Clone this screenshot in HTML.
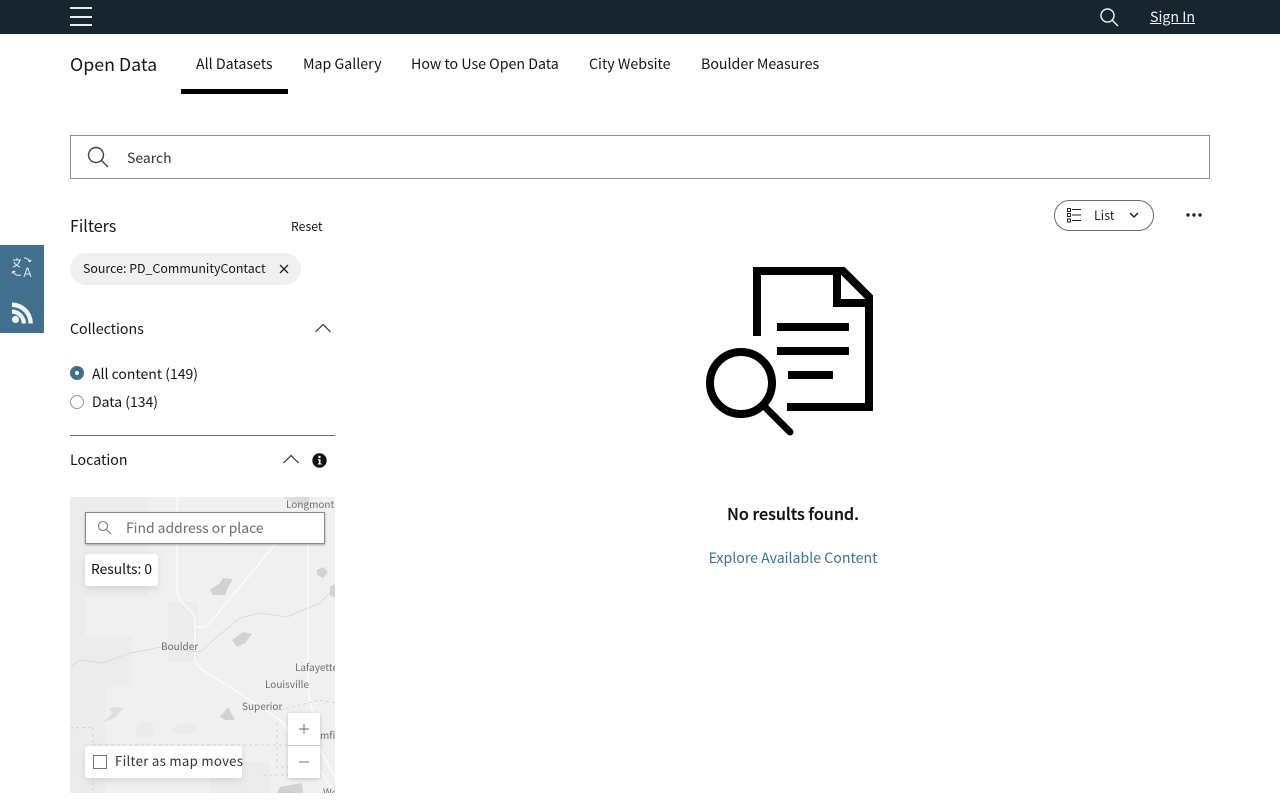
<!DOCTYPE html>
<html lang="en"><head><meta charset="utf-8"><title>Open Data</title>
<style>
html,body{margin:0;padding:0;background:#fff}
body{width:1280px;height:800px;overflow:hidden;position:relative;font-family:"Noto Sans CJK JP","Liberation Sans",sans-serif;color:#151515}
.a{position:absolute;white-space:nowrap;line-height:20px}
svg{position:absolute;display:block}
a{color:inherit}
.m{font-size:10px;color:#6e6e6e;line-height:14px}
</style></head><body>
<div class="a" style="left:0;top:0;width:1280px;height:34px;background:#17262e"></div>
<div class="a" style="left:70px;top:7px;width:22px;height:2px;background:#e8ecee"></div>
<div class="a" style="left:70px;top:16px;width:22px;height:2px;background:#e8ecee"></div>
<div class="a" style="left:70px;top:24px;width:22px;height:2px;background:#e8ecee"></div>
<svg style="left:1098px;top:6px" width="22" height="22" fill="none" stroke="#e8ecee" stroke-width="1.500"><circle cx="9.500" cy="9.500" r="6.500"/><path d="M14 14l6 6"/></svg>
<a class="a" style="left:1150px;top:7px;font-size:14.200px;color:#f2f4f5;text-decoration:underline">Sign In</a>

<div class="a" style="left:70px;top:54px;font-size:17.800px">Open Data</div>
<div class="a" style="left:196px;top:54px;font-size:14.200px">All Datasets</div>
<div class="a" style="left:181px;top:89px;width:107px;height:5px;background:#000"></div>
<div class="a" style="left:303px;top:54px;font-size:14.200px">Map Gallery</div>
<div class="a" style="left:411px;top:54px;font-size:14.200px">How to Use Open Data</div>
<div class="a" style="left:589px;top:54px;font-size:14.200px">City Website</div>
<div class="a" style="left:701px;top:54px;font-size:14.200px">Boulder Measures</div>

<div class="a" style="left:70px;top:135px;width:1138px;height:42px;border:1px solid #8f8f8f"></div>
<svg style="left:86px;top:146px" width="24" height="24" fill="none" stroke="#444" stroke-width="1.400"><circle cx="10" cy="9" r="7.500"/><path d="M15.500 14.500l6.500 6.500"/></svg>
<div class="a" style="left:127px;top:148px;font-size:14px;color:#333">Search</div>

<div class="a" style="left:0;top:245px;width:44px;height:88px;background:#41708f"></div>
<svg style="left:10px;top:255px" width="24" height="24" fill="none" stroke="#e8eef2" stroke-width="1"><path d="M3 5h8M7 3v2M10 5c-1 4-4 6-7 7M4 7c1 2 3 4 6 5"/><path d="M14 3c3 0 5 1 6 4M20 7l-2-1.500M20 7l1.200-2.200"/><path d="M11 20c-3 1-7 0-8-4M3 16l-1 2.500M3 16l2.500 1"/><path d="M14 22l3.200-9h.6l3.200 9M15 19h5"/></svg>
<svg style="left:11px;top:302px" width="22" height="22" fill="#eef3f6"><circle cx="4.500" cy="17.500" r="3.600"/><path d="M1 7.500v4.300a9.700 9.700 0 0 1 9.700 9.700h4.300A14 14 0 0 0 1 7.500zM1 .5v4.500A16.500 16.500 0 0 1 17.500 21.500h4.300A20.800 20.800 0 0 0 1 .5z"/></svg>

<div class="a" style="left:70px;top:215px;font-size:16.100px">Filters</div>
<div class="a" style="left:291px;top:216px;font-size:12.300px">Reset</div>
<div class="a" style="left:70px;top:253px;width:231px;height:32px;border-radius:16px;background:#f0f0f0"></div>
<div class="a" style="left:83px;top:258px;font-size:12.400px">Source: PD_CommunityContact</div>
<svg style="left:279px;top:264px" width="10" height="10" stroke="#222" stroke-width="1.300"><path d="M1 1l8 8M9 1l-8 8"/></svg>

<div class="a" style="left:70px;top:319px;font-size:14.200px">Collections</div>
<svg style="left:315px;top:323px" width="16" height="10" fill="none" stroke="#333" stroke-width="1.200"><path d="M.5 9L8 1.500 15.500 9"/></svg>
<div class="a" style="left:70px;top:366px;width:14px;height:14px;border-radius:50%;background:#41708f"></div>
<div class="a" style="left:75px;top:371px;width:4px;height:4px;border-radius:50%;background:#fff"></div>
<div class="a" style="left:92px;top:364px;font-size:14px">All content (149)</div>
<div class="a" style="left:70px;top:395px;width:12px;height:12px;border-radius:50%;border:1px solid #949494"></div>
<div class="a" style="left:92px;top:392px;font-size:14px">Data (134)</div>
<div class="a" style="left:70px;top:435px;width:265px;height:1px;background:#6b6b6b"></div>
<div class="a" style="left:70px;top:450px;font-size:14.200px">Location</div>
<svg style="left:283px;top:454px" width="16" height="10" fill="none" stroke="#333" stroke-width="1.200"><path d="M.5 9L8 1.500 15.500 9"/></svg>
<svg style="left:312px;top:453px" width="15" height="15"><circle cx="7.500" cy="7.500" r="7.200" fill="#111"/><circle cx="7.500" cy="4" r="1.200" fill="#fff"/><path d="M5.800 6.300h2.700v4.200h1v1H5.800v-1h1V7.300h-1z" fill="#fff"/></svg>

<svg style="left:70px;top:497px" width="265" height="296" viewBox="0 0 265 296">
<rect width="265" height="296" fill="#f0f0f0"/>
<g fill="#ececec"><rect x="0" y="0" width="78" height="100"/><rect x="0" y="100" width="15" height="60"/><rect x="0" y="140" width="62" height="50"/><rect x="0" y="190" width="35" height="106"/><rect x="98" y="105" width="30" height="60"/><rect x="140" y="265" width="60" height="31"/></g>
<g fill="#ebebeb"><ellipse cx="75" cy="233" rx="10" ry="8"/><ellipse cx="115" cy="232" rx="12" ry="5"/></g>
<g fill="#d2d2d2"><path d="M140 93l10-7 3-5 10 1-5 8-3 8-12 0z"/><path d="M162 143l11-8 9 2-7 9-8 4z"/><path d="M247 73l6-3 5 5-5 6-6-3z"/><path d="M260 90l5-3v13l-5-1z"/><path d="M150 220l8-10 7 13-10 0z"/><path d="M210 290l22-4 1 10h-26z"/></g>
<path d="M42 210l11 1-8 10-12 4 7-6 3-4-4-2z" fill="#dedede"/>
<g fill="none" stroke="#fbfbfb" stroke-width="1.500"><path d="M107 0v92q0 8 5 13l8 8q5 5 5 9v39q0 6 5 10l28 18 52 34 30 36 25 37"/><path d="M125 130h8q4 0 7-4l63-76 37-40"/><path d="M238 0v193l12 60 15 27"/></g>
<path fill="none" stroke="#d6d6d6" stroke-width=".8" d="M0 170l10-7 23 3 27-10 17-3 13-3 17 3 23 2 17-15 23-19 20-5 27 4 33-14 15-16"/>
<g fill="none" stroke="#cccccc" stroke-width=".8" stroke-dasharray="3 3"><path d="M0 231l23-1v66M23 248h194M207 226v44h20M193 278h30l3-18M250 203l15 3M210 213l40-10"/></g>
<path d="M212 0l17 9 10-1v-8z" fill="#dedede"/>
</svg>
<div class="a m" style="left:286px;top:497px;width:49px;overflow:hidden">Longmont</div>
<div class="a m" style="left:161px;top:639px">Boulder</div>
<div class="a m" style="left:295px;top:660px;width:40px;overflow:hidden">Lafayette</div>
<div class="a m" style="left:265px;top:677px">Louisville</div>
<div class="a m" style="left:242px;top:699px">Superior</div>
<div class="a m" style="left:320px;top:728px;width:15px;overflow:hidden">mfield</div>
<div class="a m" style="left:323px;top:785px;width:12px;height:8px;overflow:hidden">Westminster</div>

<div class="a" style="left:85px;top:512px;width:238px;height:30px;background:#fff;border:1px solid #8a8a8a;box-shadow:0 1px 2px rgba(0,0,0,.3)"></div>
<svg style="left:97px;top:520px" width="15" height="15" fill="none" stroke="#777" stroke-width="1.100"><circle cx="6" cy="6" r="4.500"/><path d="M9.500 9.500l4.500 4.500"/></svg>
<div class="a" style="left:126px;top:518px;font-size:13.900px;color:#6e6e6e">Find address or place</div>
<div class="a" style="left:85px;top:554px;width:73px;height:32px;background:#fff;border-radius:3px;box-shadow:0 3px 8px rgba(0,0,0,.1)"></div>
<div class="a" style="left:91px;top:558px;font-size:13.800px;color:#111">Results: 0</div>
<div class="a" style="left:85px;top:746px;width:157px;height:32px;background:#fff;border-radius:3px;box-shadow:0 3px 8px rgba(0,0,0,.1)"></div>
<div class="a" style="left:93px;top:755px;width:12px;height:12px;border:1px solid #757575"></div>
<div class="a" style="left:115px;top:751px;font-size:13.200px;letter-spacing:.3px;color:#333">Filter as map moves</div>
<div class="a" style="left:288px;top:713px;width:32px;height:65px;background:#fff;box-shadow:0 1px 4px rgba(0,0,0,.2)"></div>
<div class="a" style="left:288px;top:745px;width:32px;height:1px;background:#c8c8c8"></div>
<svg style="left:298px;top:723px" width="12" height="46" stroke="#6e6e6e" stroke-width="1"><path d="M1 6h10M6 1v10M1 39h10"/></svg>

<div class="a" style="left:1054px;top:200px;width:98px;height:29px;border:1px solid #6b6b6b;border-radius:16px"></div>
<svg style="left:1066px;top:207px" width="16" height="16" fill="none" stroke="#222" stroke-width="1"><path d="M1.500 1.500h3v3h-3zM1.500 6.500h3v3h-3zM1.500 12h3v3h-3zM6 2.500h9M6 8h9M6 13.500h9"/></svg>
<div class="a" style="left:1094px;top:205px;font-size:12.500px;color:#222">List</div>
<svg style="left:1129px;top:212px" width="10" height="7" fill="none" stroke="#222" stroke-width="1.400"><path d="M1 1l4 4 4-4"/></svg>
<svg style="left:1185px;top:212px" width="18" height="6" fill="#222"><circle cx="3" cy="3" r="1.700"/><circle cx="9" cy="3" r="1.700"/><circle cx="15" cy="3" r="1.700"/></svg>

<svg style="left:700px;top:260px" width="180" height="180" viewBox="700 260 180 180" fill="none" stroke="#000" stroke-width="8">
<path d="M757 336V271H843L869 297V407H787"/>
<path d="M837 271V303H869"/>
<path d="M777 327H849M777 351H849M788 375H833"/>
<circle cx="741" cy="383" r="31"/>
<path d="M765 407L790 432" stroke-linecap="round" stroke-width="7"/>
</svg>
<div class="a" style="left:593px;top:503px;width:400px;text-align:center;font-size:16.200px;font-weight:500;-webkit-text-stroke:.25px #111;color:#111">No results found.</div>
<div class="a" style="left:593px;top:548px;width:400px;text-align:center;font-size:14.150px;color:#41708f">Explore Available Content</div>
</body></html>
